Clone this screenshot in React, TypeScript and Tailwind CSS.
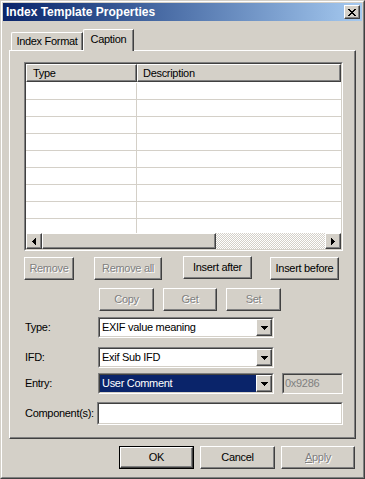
import React from 'react';

const raised =
  'bg-[#d4d0c8] border border-t-white border-l-white border-r-[#404040] border-b-[#404040] shadow-[inset_-1px_-1px_0_#808080]';
const dim = 'text-[#808080] [text-shadow:1px_1px_0_#fff]';

function Sunken({ className = '', inner = '', children }: { className?: string; inner?: string; children?: React.ReactNode }) {
  return (
    <div className={`border border-t-[#808080] border-l-[#808080] border-r-white border-b-white ${className}`}>
      <div className={`h-full border border-t-[#404040] border-l-[#404040] border-r-[#d4d0c8] border-b-[#d4d0c8] ${inner}`}>
        {children}
      </div>
    </div>
  );
}

function Btn({ label, className = '', disabled }: { label: React.ReactNode; className?: string; disabled?: boolean }) {
  return (
    <div className={`h-[23px] flex items-center justify-center ${raised} ${disabled ? dim : 'text-black'} ${className}`}>
      {label}
    </div>
  );
}

function Arrow({ dir }: { dir: 'down' | 'left' | 'right' }) {
  if (dir === 'down')
    return (
      <svg width="7" height="4" viewBox="0 0 7 4" shapeRendering="crispEdges">
        <path d="M0 0h7v1H0zM1 1h5v1H1zM2 2h3v1H2zM3 3h1v1H3z" fill="#000" />
      </svg>
    );
  const d = dir === 'left' ? 'M3 0h1v7H3zM2 1h1v5H2zM1 2h1v3H1zM0 3h1v1H0z' : 'M0 0h1v7H0zM1 1h1v5H1zM2 2h1v3H2zM3 3h1v1H3z';
  return (
    <svg width="4" height="7" viewBox="0 0 4 7" shapeRendering="crispEdges">
      <path d={d} fill="#000" />
    </svg>
  );
}

function CloseGlyph() {
  const rects = [];
  for (let i = 0; i < 7; i++) {
    rects.push(<rect key={'a' + i} x={i} y={i} width={2} height={1} />);
    rects.push(<rect key={'b' + i} x={6 - i} y={i} width={2} height={1} />);
  }
  return (
    <svg width="8" height="7" viewBox="0 0 8 7" shapeRendering="crispEdges" fill="#000">
      {rects}
    </svg>
  );
}

function Combo({ value, selected, className = '' }: { value: string; selected?: boolean; className?: string }) {
  return (
    <Sunken className={`h-[21px] ${className}`} inner="bg-white flex">
      <div className={`flex-1 flex items-center pl-[2px] ${selected ? 'bg-[#0a246a] text-white' : 'text-black'}`}>{value}</div>
      <div className={`w-[16px] h-[17px] flex items-center justify-center ${raised}`}>
        <Arrow dir="down" />
      </div>
    </Sunken>
  );
}

export default function App() {
  const rows = Array.from({ length: 9 });

  return (
    <div className="w-[365px] h-[479px] bg-[#d4d0c8] border border-t-[#d4d0c8] border-l-[#d4d0c8] border-r-[#404040] border-b-[#404040] text-[11px] tracking-[-0.3px] leading-none font-['Liberation_Sans',Arial,sans-serif] select-none">
      <div className="h-full border border-t-white border-l-white border-r-[#808080] border-b-[#808080] p-px flex flex-col">
        {/* title bar */}
        <div className="h-[18px] flex items-center bg-linear-to-r from-[#0a246a] to-[#a6caf0] pl-[3px] pr-[2px]">
          <span className="flex-1 text-white font-bold text-[12px] tracking-normal">Index Template Properties</span>
          <div className={`w-[16px] h-[14px] flex items-center justify-center ${raised}`}>
            <CloseGlyph />
          </div>
        </div>

        {/* tabs */}
        <div className="mt-[8px] ml-[8px] h-[21px] flex items-end">
          <div className="w-[72px] h-[18px] flex items-center justify-center border-t border-l border-white border-r border-r-[#404040] rounded-tl-[2px] shadow-[inset_-1px_0_0_#808080]">
            Index Format
          </div>
          <div className="relative z-10 -mb-px w-[51px] h-[22px] bg-[#d4d0c8] flex items-center justify-center pb-[2px] border-t border-l border-white border-r border-r-[#404040] rounded-tl-[2px] shadow-[inset_-1px_0_0_#808080]">
            Caption
          </div>
        </div>

        {/* panel */}
        <div className="ml-[6px] w-[347px] h-[389px] flex flex-col border border-t-white border-l-white border-r-[#404040] border-b-[#404040] shadow-[inset_-1px_-1px_0_#808080]">
          {/* list view */}
          <Sunken className="ml-[14px] mt-[11px] w-[319px] h-[189px]" inner="bg-white flex flex-col">
            <div className="h-[18px] flex">
              <div className={`w-[111px] flex items-center pl-[6px] ${raised}`}>Type</div>
              <div className={`flex-1 flex items-center pl-[5px] ${raised}`}>Description</div>
            </div>
            <div className="h-[151px] pt-px overflow-hidden">
              {rows.map((_, i) => (
                <div key={i} className="h-[17px] flex border-b border-[#d4d0c8]">
                  <div className="w-[111px] border-r border-[#d4d0c8]" />
                  <div className="flex-1" />
                </div>
              ))}
            </div>
            <div className="h-[16px] flex">
              <div className={`w-[16px] flex items-center justify-center ${raised}`}>
                <Arrow dir="left" />
              </div>
              <div className={`w-[174px] ${raised}`} />
              <div className="flex-1 bg-[image:repeating-conic-gradient(#fff_0_25%,#d4d0c8_0_50%)] bg-[length:2px_2px]" />
              <div className={`w-[16px] flex items-center justify-center ${raised}`}>
                <Arrow dir="right" />
              </div>
            </div>
          </Sunken>

          {/* action buttons */}
          <div className="mt-[6px] flex">
            <Btn label="Remove" disabled className="ml-[14px] w-[50px]" />
            <Btn label="Remove all" disabled className="ml-[20px] w-[68px]" />
            <Btn label="Insert after" className="ml-[21px] w-[69px] -mt-px" />
            <Btn label="Insert before" className="ml-[18px] w-[69px]" />
          </div>
          <div className="mt-[8px] flex">
            <Btn label="Copy" disabled className="ml-[89px] w-[55px]" />
            <Btn label="Get" disabled className="ml-[9px] w-[54px]" />
            <Btn label="Set" disabled className="ml-[9px] w-[55px]" />
          </div>

          {/* fields */}
          <div className="mt-[6px] flex items-center">
            <span className="ml-[15px] w-[73px]">Type:</span>
            <Combo value="EXIF value meaning" className="w-[176px]" />
          </div>
          <div className="mt-[9px] flex items-center">
            <span className="ml-[15px] w-[73px]">IFD:</span>
            <Combo value="Exif Sub IFD" className="w-[176px]" />
          </div>
          <div className="mt-[5px] flex items-center">
            <span className="ml-[15px] w-[73px]">Entry:</span>
            <Combo value="User Comment" selected className="w-[176px]" />
            <Sunken className="ml-[8px] w-[61px] h-[21px]" inner="bg-[#d4d0c8] flex items-center pl-[1px] text-[#808080]">
              0x9286
            </Sunken>
          </div>
          <div className="mt-[8px] flex items-center">
            <span className="ml-[15px] w-[72px]">Component(s):</span>
            <Sunken className="w-[246px] h-[23px]" inner="bg-white" />
          </div>
        </div>

        {/* dialog buttons */}
        <div className="mt-[7px] flex">
          <div className="ml-[116px] w-[75px] h-[23px] border border-black">
            <div className={`h-full flex items-center justify-center ${raised}`}>OK</div>
          </div>
          <Btn label="Cancel" className="ml-[6px] w-[75px]" />
          <Btn
            label={
              <span>
                <span className="underline">A</span>pply
              </span>
            }
            disabled
            className="ml-[6px] w-[74px]"
          />
        </div>
      </div>
    </div>
  );
}
